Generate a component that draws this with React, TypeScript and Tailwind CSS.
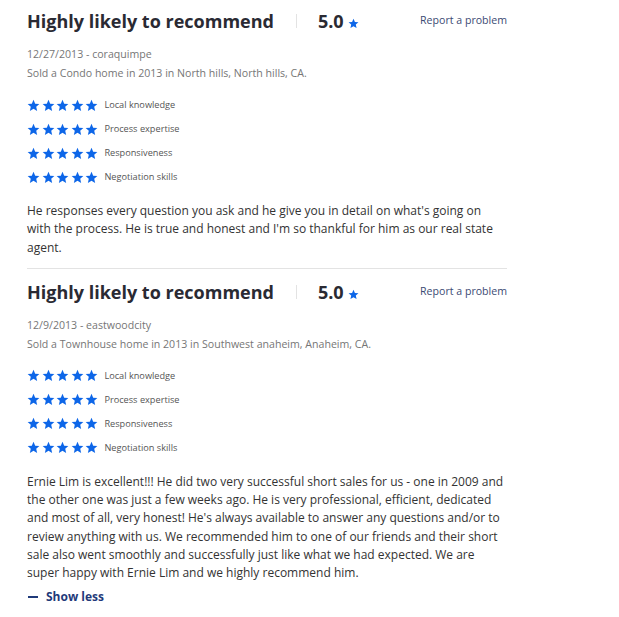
import React from "react";

const reviews = [
  {
    date: "12/27/2013 - coraquimpe",
    sold: "Sold a Condo home in 2013 in North hills, North hills, CA.",
    text: "He responses every question you ask and he give you in detail on what's going on with the process. He is true and honest and I'm so thankful for him as our real state agent.",
  },
  {
    date: "12/9/2013 - eastwoodcity",
    sold: "Sold a Townhouse home in 2013 in Southwest anaheim, Anaheim, CA.",
    text: "Ernie Lim is excellent!!! He did two very successful short sales for us - one in 2009 and the other one was just a few weeks ago. He is very professional, efficient, dedicated and most of all, very honest! He's always available to answer any questions and/or to review anything with us. We recommended him to one of our friends and their short sale also went smoothly and successfully just like what we had expected. We are super happy with Ernie Lim and we highly recommend him.",
    showLess: true,
  },
];

const skills = ["Local knowledge", "Process expertise", "Responsiveness", "Negotiation skills"];

function Star({ size = 13 }: { size?: number }) {
  return (
    <svg width={size} height={size} viewBox="0 0 24 24" className="shrink-0">
      <path
        fill="#0d66e8"
        d="M12 1.5l3.1 7.1 7.7.7-5.8 5.1 1.7 7.6L12 18l-6.7 4 1.7-7.6-5.8-5.1 7.7-.7z"
      />
    </svg>
  );
}

function Review({ r }: { r: (typeof reviews)[number] }) {
  return (
    <div>
      <div className="flex items-center h-[40px]">
        <h2 className="text-[18px] font-bold text-[#2a2a33] leading-none">Highly likely to recommend</h2>
        <div className="w-px h-[14px] bg-[#e3e3e3] ml-[22px] mr-[21px]" />
        <span className="text-[18px] font-bold text-[#2a2a33] leading-none">5.0</span>
        <span className="ml-[4px] mt-[5px]">
          <Star size={11} />
        </span>
        <a className="ml-auto text-[10.6px] text-[#3b4a73]">Report a problem</a>
      </div>
      <div className="mt-[4px] text-[10.6px] leading-[19px] text-[#767676]">
        <div>{r.date}</div>
        <div>{r.sold}</div>
      </div>
      <div className="mt-[14px] flex flex-col gap-[8px]">
        {skills.map((s) => (
          <div key={s} className="flex items-center h-[16px]">
            <div className="flex gap-[1.6px]">
              {[0, 1, 2, 3, 4].map((i) => (
                <Star key={i} size={13} />
              ))}
            </div>
            <span className="ml-[6px] text-[9.2px] text-[#555]">{s}</span>
          </div>
        ))}
      </div>
      <p className="mt-[17px] text-[12px] leading-[18.3px] text-[#333]">{r.text}</p>
      {r.showLess && (
        <div className="mt-[5px] flex items-center text-[12px] font-bold text-[#1f3a7a]">
          <span className="inline-block w-[10px] h-[2px] bg-[#1f3a7a] ml-[1px] mr-[8px]" />
          Show less
        </div>
      )}
    </div>
  );
}

export default function App() {
  return (
    <div
      className="bg-white min-h-[617px] pl-[27px] pt-[1px]"
      style={{ fontFamily: '"Open Sans", "Noto Sans", sans-serif' }}
    >
      <div className="w-[480px]">
        <Review r={reviews[0]} />
        <div className="h-px bg-[#e3e3e3] mt-[11px]" />
        <div className="mt-[3px]">
          <Review r={reviews[1]} />
        </div>
      </div>
    </div>
  );
}
